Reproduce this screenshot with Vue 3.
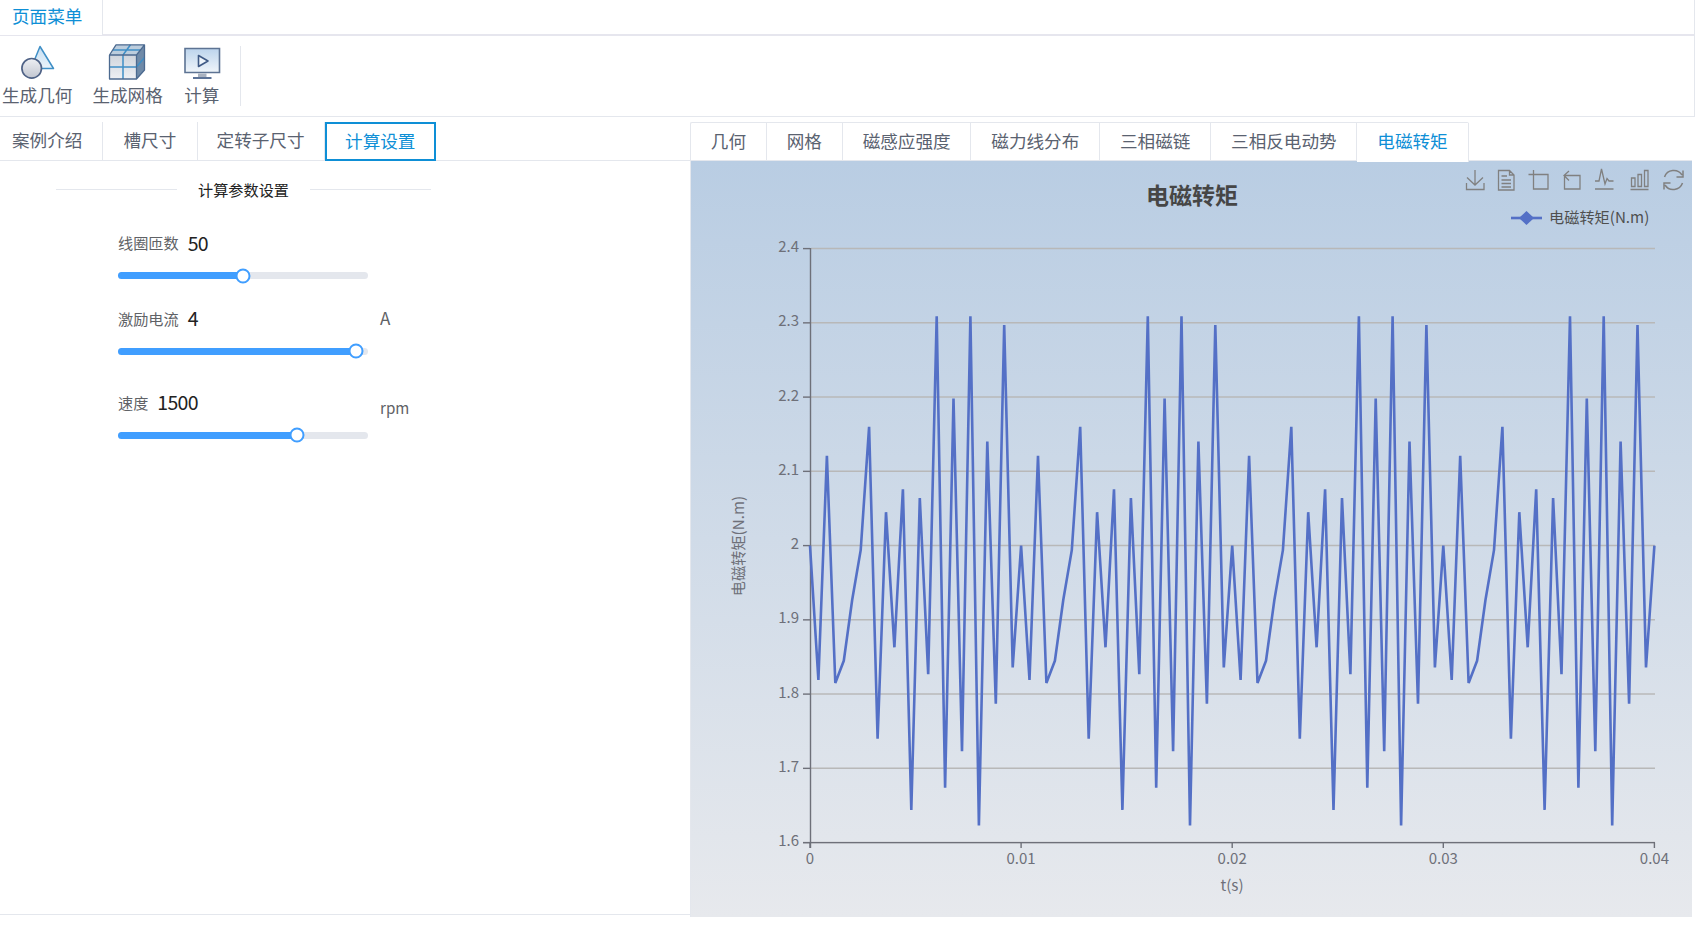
<template>
  <div class="page">
    <div class="top-box">
      <div class="menu-bar">
        <div class="menu-tab">页面菜单</div>
      </div>
      <div class="tool-bar">
        <div class="tool-item">
          <svg class="tool-icon" viewBox="0 0 36 36" width="36" height="36">
            <defs>
              <linearGradient id="circ" x1="0" y1="0" x2="0" y2="1">
                <stop offset="0" stop-color="#eef0f4" />
                <stop offset="1" stop-color="#c2c6d0" />
              </linearGradient>
              <linearGradient id="tri" x1="0" y1="0" x2="0" y2="1">
                <stop offset="0" stop-color="#c6def2" />
                <stop offset="1" stop-color="#eaf3fa" />
              </linearGradient>
            </defs>
            <path d="M21 2.5 34.500 24.500H12z" fill="url(#tri)" stroke="#3f8fc6" stroke-width="1.500" stroke-linejoin="round" />
            <circle cx="12.700" cy="24.300" r="9.800" fill="url(#circ)" stroke="#4f6286" stroke-width="1.700" />
          </svg>
          <span>生成几何</span>
        </div>
        <div class="tool-item">
          <svg class="tool-icon" viewBox="0 0 36 36" width="36" height="36">
            <defs>
              <linearGradient id="front" x1="0" y1="0" x2="0" y2="1">
                <stop offset="0" stop-color="#cfd4dc" />
                <stop offset="1" stop-color="#eef0f4" />
              </linearGradient>
            </defs>
            <path d="M-0.500 11H26.500V35H-0.500z" fill="url(#front)" />
            <path d="M-0.500 11 6 .8H34.500L26.500 11z" fill="#bccddd" />
            <path d="M26.500 11 34.500 .8V26L26.500 35z" fill="#6f8aa8" />
            <path d="M13 11V35M-0.500 23H26.500M20.500 .8 13 11M26.500 23 34.500 13.500M3 6H30.500" stroke="#3f8fc6" stroke-width="1.500" fill="none" />
            <path d="M-0.500 11 6 .8H34.500V26L26.500 35H-0.500zM-0.500 11H26.500V35M26.500 11 34.500 .8" fill="none" stroke="#4c6a90" stroke-width="1.300" stroke-linejoin="round" />
          </svg>
          <span>生成网格</span>
        </div>
        <div class="tool-item last">
          <svg class="tool-icon" viewBox="0 0 36 36" width="36" height="36">
            <defs>
              <linearGradient id="scr" x1="0" y1="0" x2="0" y2="1">
                <stop offset="0" stop-color="#bcd4ec" />
                <stop offset="1" stop-color="#f0f5fa" />
              </linearGradient>
            </defs>
            <path d="M1 4.500H35.500V28.500H1z" fill="url(#scr)" stroke="#5d7393" stroke-width="1.600" />
            <path d="M14.500 11.500V22.500L24 17z" fill="#eef4fa" stroke="#3f5a85" stroke-width="1.600" stroke-linejoin="round" />
            <path d="M14 29.500H22.500V33H14z" fill="#a9b2c0" />
            <path d="M9 34H27.500" stroke="#3f5a85" stroke-width="1.700" />
          </svg>
          <span>计算</span>
        </div>
        <div class="tool-sep"></div>
      </div>
    </div>

    <div class="main">
      <div class="left-pane">
        <div class="tabs">
          <div
            v-for="(t, i) in leftTabs"
            :key="t"
            class="tab"
            :class="{ first: i === 0, slot: i === 1, rotor: i === 2, boxed: i === 3 }"
          >{{ t }}</div>
        </div>
        <div class="settings">
          <div class="set-title"><i></i><span>计算参数设置</span><i></i></div>
          <div v-for="p in params" :key="p.label" class="param" :style="{ marginTop: p.top + 'px' }">
            <div class="param-head">
              <span class="param-label">{{ p.label }}</span>
              <span class="param-value">{{ p.value }}</span>
              <span v-if="p.unit" class="param-unit" :class="p.unit === 'rpm' ? 'low' : 'big'">{{ p.unit }}</span>
            </div>
            <div class="slider">
              <div class="slider-fill" :style="{ width: p.pct + '%' }"></div>
              <div class="slider-dot" :style="{ left: p.pct + '%' }"></div>
            </div>
          </div>
        </div>
      </div>

      <div class="right-pane">
        <div class="tabs right-tabs">
          <div class="tab-strip">
            <div
              v-for="(t, i) in rightTabs"
              :key="t"
              class="tab"
              :class="{ active: i === rightTabs.length - 1 }"
            >{{ t }}</div>
          </div>
        </div>
        <div class="chart-box">
          <svg class="chart" viewBox="690 161 1002 756" width="1002" height="756">
            <text x="1192" y="204" class="c-title" text-anchor="middle">电磁转矩</text>

            <g fill="none" stroke="#808080" stroke-width="1.300">
              <path d="M1475 170V185M1467 177.500 1475 185 1483 177.500M1466.500 183V189.500H1484V183" />
              <path d="M1498.500 170.500H1509.500L1514 175V190H1498.500ZM1509.500 170.500V175H1514M1501.500 176H1507M1501.500 180H1511M1501.500 183.500H1511M1501.500 187H1511" />
              <path d="M1533.500 170V189H1548V174.500H1528.500" />
              <path d="M1569 171 1564 175.500 1569 180.500M1564 175.500H1580V189H1564.500V175.500" />
              <path d="M1595 189H1613.500M1595 181H1599L1601.500 169 1605 184 1607 178.500 1609 181H1613.500" />
              <path d="M1630.500 189.500H1648.500M1631.500 186.500V178H1635V186.500ZM1638 186.500V174.500H1641.500V186.500ZM1644.500 186.500V170.500H1648V186.500Z" />
              <path d="M1664.500 177A9.800 9.800 0 0 1 1682 175M1683 170.500V177H1676.500M1682.500 183A9.800 9.800 0 0 1 1665 185M1664 189.500V183H1670.500" stroke-width="1.500" />
            </g>

            <path d="M1511 218H1542" stroke="#5470c6" stroke-width="2.600" />
            <path d="M1526.500 211 1534 218 1526.500 225 1519 218Z" fill="#5470c6" />
            <text x="1549" y="222.500" class="c-legend">电磁转矩(N.m)</text>

            <g stroke="#b8b8b8" stroke-width="1.500">
              <line v-for="t in yTicks" :key="t.label" x1="811" x2="1655" :y1="t.y" :y2="t.y" />
            </g>
            <g stroke="#6e7079" stroke-width="1.400">
              <line x1="810.500" x2="810.500" y1="248" y2="848" />
              <line x1="803" x2="1655" y1="842.600" y2="842.600" />
              <line v-for="t in yTicks" :key="'yt' + t.label" x1="803" x2="810" :y1="t.y" :y2="t.y" />
              <line v-for="t in xTicks" :key="'xt' + t.label" :x1="t.x" :x2="t.x" y1="842.600" y2="848" />
            </g>
            <polyline :points="linePoints" fill="none" stroke="#5470c6" stroke-width="2.600" stroke-linejoin="bevel" />

            <text v-for="t in yTicks" :key="'yl' + t.label" x="799" :y="t.y + 3.500" class="c-tick" text-anchor="end">{{ t.label }}</text>
            <text v-for="t in xTicks" :key="'xl' + t.label" :x="t.x" y="864" class="c-tick" text-anchor="middle">{{ t.label }}</text>
            <text x="1232" y="891" class="c-name" text-anchor="middle">t(s)</text>
            <text transform="translate(743.500 546) rotate(-90)" class="c-name" text-anchor="middle">电磁转矩(N.m)</text>
          </svg>
        </div>
      </div>
    </div>
  </div>
</template>

<script setup>
import { computed } from 'vue'

const leftTabs = ['案例介绍', '槽尺寸', '定转子尺寸', '计算设置']
const rightTabs = ['几何', '网格', '磁感应强度', '磁力线分布', '三相磁链', '三相反电动势', '电磁转矩']

const params = [
  { label: '线圈匝数', value: '50', pct: 50, top: 29 },
  { label: '激励电流', value: '4', unit: 'A', pct: 95, top: 26.5 },
  { label: '速度', value: '1500', unit: 'rpm', pct: 71.5, top: 35 },
]

// one period of the torque curve, repeats 4 times over 0..0.04s
const period = [
  2.0, 1.819, 2.121, 1.815, 1.845, 1.927, 1.994, 2.16, 1.74, 2.045, 1.863, 2.076, 1.644,
  2.064, 1.827, 2.309, 1.674, 2.198, 1.723, 2.309, 1.623, 2.14, 1.787, 2.297, 1.836,
]

const yPos = (v) => 842.6 - (v - 1.6) * 742.5
const xPos = (t) => 810 + t * 21110

const yTicks = ['2.4', '2.3', '2.2', '2.1', '2', '1.9', '1.8', '1.7', '1.6'].map((label) => ({
  label,
  y: yPos(Number(label)),
}))
const xTicks = ['0', '0.01', '0.02', '0.03', '0.04'].map((label) => ({
  label,
  x: xPos(Number(label)),
}))

const linePoints = computed(() => {
  const pts = []
  for (let i = 0; i <= 100; i++) {
    const v = i === 100 ? 2.0 : period[i % 25]
    pts.push(xPos(i * 0.0004).toFixed(1) + ',' + yPos(v).toFixed(1))
  }
  return pts.join(' ')
})
</script>

<style>
html, body {
  margin: 0;
  background: #fff;
}
</style>

<style scoped>
.page {
  width: 1699px;
  height: 930px;
  font-family: "Noto Sans CJK SC", "Noto Sans", sans-serif;
  color: #606266;
  overflow: hidden;
}
.top-box {
  width: 1695px;
  box-sizing: border-box;
  border-right: 1px solid #e4e7ed;
}
.menu-bar {
  height: 34px;
  border-bottom: 2px solid #e6e6ee;
}
.menu-tab {
  width: 103px;
  height: 35px;
  box-sizing: border-box;
  padding-left: 12px;
  line-height: 31px;
  font-size: 17.6px;
  color: #0e8fd6;
  background: #fff;
  border-right: 1px solid #e4e7ed;
}
.tool-bar {
  height: 80px;
  border-bottom: 1px solid #e4e7ed;
  display: flex;
  align-items: flex-start;
  gap: 20px;
  padding-left: 2px;
}
.tool-item {
  display: flex;
  flex-direction: column;
  align-items: center;
  font-size: 17.6px;
  line-height: 24px;
  color: #5a6270;
  padding-top: 8px;
}
.tool-item.last {
  margin-left: 1px;
}
.tool-icon {
  display: block;
  margin-bottom: 3px;
  overflow: visible;
}
.tool-sep {
  width: 1px;
  height: 60px;
  margin-top: 10px;
  background: #e4e7ed;
}
.main {
  width: 1692px;
  display: flex;
}
.left-pane {
  width: 690px;
  height: 797px;
  flex: none;
  border-bottom: 1px solid #e4e7ed;
}
.right-pane {
  flex: 1;
  min-width: 0;
}
.tabs {
  height: 44px;
  box-sizing: border-box;
  padding-top: 5px;
  border-bottom: 1px solid #e4e7ed;
  display: flex;
}
.tab {
  padding: 0 19.85px;
  border-right: 1px solid #e4e7ed;
  font-size: 17.6px;
  line-height: 35px;
  height: 38px;
  box-sizing: border-box;
  color: #5a6270;
  white-space: nowrap;
}
.tab.first {
  padding-left: 12px;
  padding-right: 19.6px;
}
.tab.slot {
  padding: 0 20.3px 0 20.5px;
}
.tab.rotor {
  padding: 0 19px;
}
.tab.boxed {
  height: 39px;
  line-height: 33px;
  border: 2px solid #0e8fd6;
  color: #0e8fd6;
  padding: 0 18.5px;
}
.tab-strip {
  display: flex;
  border-top: 1px solid #e4e7ed;
  border-left: 1px solid #e4e7ed;
  border-radius: 2px 2px 0 0;
}
.right-tabs .tab {
  height: 37px;
  line-height: 35px;
}
.tab.active {
  color: #0e8fd6;
  height: 39px;
  margin-bottom: -1px;
  background: #fff;
}
.settings {
  padding-left: 56px;
  width: 375px;
}
.set-title {
  display: flex;
  align-items: center;
  gap: 21px;
  margin-top: 16px;
  height: 24px;
  font-size: 15.17px;
  color: #222;
}
.set-title i {
  flex: 1;
  height: 1px;
  background: #e4e7ed;
}
.param {
  margin-left: 62px;
  width: 250px;
}
.param-head {
  display: flex;
  align-items: center;
  height: 24px;
  position: relative;
  white-space: nowrap;
}
.param-label {
  font-size: 15.17px;
  color: #606266;
}
.param-value {
  margin-left: 9px;
  font-size: 19.5px;
  letter-spacing: -0.7px;
  color: #222;
}
.param-unit {
  position: absolute;
  left: 262px;
  top: 0;
  font-size: 15.17px;
  line-height: 24px;
  color: #606266;
}
.param-unit.big {
  font-size: 17px;
}
.param-unit.low {
  top: 5px;
}
.slider {
  position: relative;
  height: 7px;
  margin-top: 18px;
  background: #e4e7ed;
  border-radius: 4px;
}
.slider-fill {
  height: 100%;
  background: #409eff;
  border-radius: 4px;
}
.slider-dot {
  position: absolute;
  top: 50%;
  width: 15px;
  height: 15px;
  box-sizing: border-box;
  border: 2px solid #409eff;
  border-radius: 50%;
  background: #fff;
  transform: translate(-50%, -50%);
}
.chart-box {
  height: 756px;
  background: linear-gradient(180deg, #b9cde3 0%, #e7e9ed 100%);
  box-shadow: inset 1px 0 0 #e4e7ed;
}
.chart {
  display: block;
}
.c-title {
  font-size: 23px;
  font-weight: 700;
  fill: #464646;
}
.c-legend {
  font-size: 15.2px;
  fill: #4f4f4f;
}
.c-tick {
  font-size: 15px;
  fill: #6e7079;
}
.c-name {
  font-size: 15.2px;
  fill: #6e7079;
}
</style>
